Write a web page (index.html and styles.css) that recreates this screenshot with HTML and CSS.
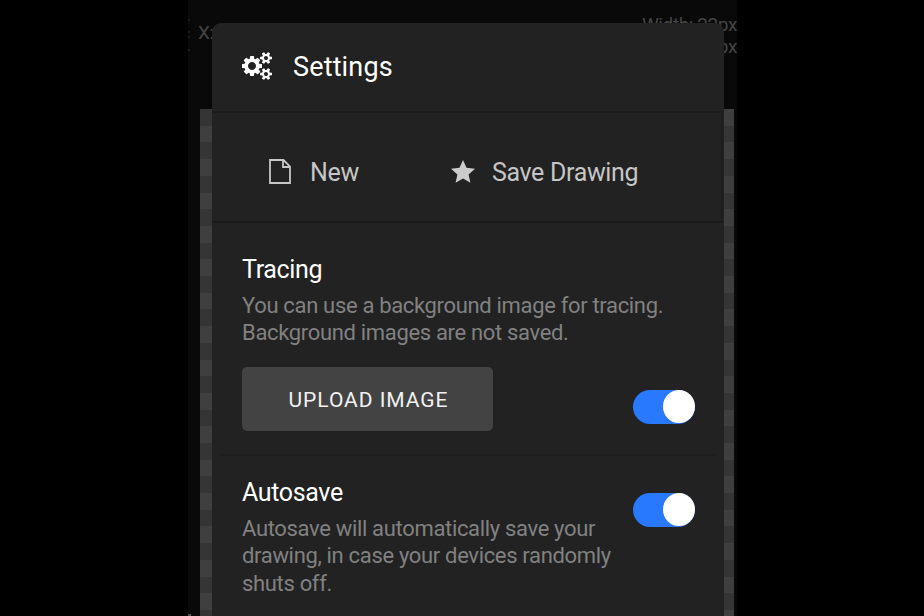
FILE: index.html
```html
<!DOCTYPE html>
<html lang="en">
<head>
<meta charset="utf-8">
<title>Settings</title>
<link rel="stylesheet" href="styles.css">
</head>
<body>
<div class="app">
  <div class="editor">
    <header class="toolbar">
      <svg class="menu-edge" viewBox="0 0 2 34"><path d="M0 1h2M0 13h2M0 18h2M0 31h2"/></svg>
      <span class="position">X:</span>
      <span class="dimensions">Width: 22px<br>Height: 22px</span>
    </header>
    <div class="canvas"><div class="checker checker-left"></div><div class="checker checker-right"></div></div>
  </div>
  <span class="swatch-edge"></span>
  <main class="modal">
    <header class="modal-header">
      <svg class="cogs" viewBox="0 0 1920 1792"><path d="M896 896q0-106-75-181t-181-75-181 75-75 181 75 181 181 75 181-75 75-181zm768 512q0-52-38-90t-90-38-90 38-38 90q0 53 37.500 90.500t90.500 37.500 90.500-37.500 37.500-90.500zm0-1024q0-52-38-90t-90-38-90 38-38 90q0 53 37.500 90.500t90.500 37.500 90.500-37.500 37.500-90.500zm-384 421v185q0 10-7 19.500t-16 10.500l-155 24q-11 35-32 76 34 48 90 115 7 11 7 20 0 12-7 19-23 30-82.500 89.500t-78.500 59.500q-11 0-21-7l-115-90q-37 19-77 31-11 108-23 155-7 24-30 24h-186q-11 0-20-7.500t-10-17.500l-23-153q-34-10-75-31l-118 89q-7 7-20 7-11 0-21-8-144-133-144-160 0-9 7-19 10-14 41-53t47-61q-23-44-35-82l-152-24q-10-1-17-9.500t-7-19.500v-185q0-10 7-19.500t16-10.500l155-24q11-35 32-76-34-48-90-115-7-11-7-20 0-12 7-20 22-30 82-89t79-59q11 0 21 7l115 90q34-18 77-32 11-108 23-154 7-24 30-24h186q11 0 20 7.500t10 17.500l23 153q34 10 75 31l118-89q8-7 20-7 11 0 21 8 144 133 144 160 0 8-7 19-12 16-42 54t-45 60q23 48 34 82l152 23q10 2 17 10.500t7 19.500zm640 533v140q0 16-149 31-12 27-30 52 51 113 51 138 0 4-4 7-122 71-124 71-8 0-46-47t-52-68q-20 2-30 2t-30-2q-14 21-52 68t-46 47q-2 0-124-71-4-3-4-7 0-25 51-138-18-25-30-52-149-15-149-31v-140q0-16 149-31 13-29 30-52-51-113-51-138 0-4 4-7 4-2 35-20t59-34 30-16q8 0 46 46.500t52 67.500q20-2 30-2t30 2q51-71 92-112l6-2q4 0 124 70 4 3 4 7 0 25-51 138 17 23 30 52 149 15 149 31zm0-1024v140q0 16-149 31-12 27-30 52 51 113 51 138 0 4-4 7-122 71-124 71-8 0-46-47t-52-68q-20 2-30 2t-30-2q-14 21-52 68t-46 47q-2 0-124-71-4-3-4-7 0-25 51-138-18-25-30-52-149-15-149-31v-140q0-16 149-31 13-29 30-52-51-113-51-138 0-4 4-7 4-2 35-20t59-34 30-16q8 0 46 46.500t52 67.500q20-2 30-2t30 2q51-71 92-112l6-2q4 0 124 70 4 3 4 7 0 25-51 138 17 23 30 52 149 15 149 31z"/></svg>
      <h1>Settings</h1>
    </header>
    <nav class="actions">
      <a class="action"><svg class="file" viewBox="0 0 22 25"><path d="M1 1h13.500l6.500 6.500V24H1zM14 1v7h7"/></svg><span>New</span></a>
      <a class="action save"><svg class="star" viewBox="0 0 24 23"><path d="M12 0l3.500 7.800 8.500.9-6.400 5.700 1.800 8.400-7.400-4.300-7.400 4.300 1.800-8.400L0 8.700l8.500-.9z"/></svg><span>Save Drawing</span></a>
    </nav>
    <section class="setting tracing">
      <h2>Tracing</h2>
      <p>You can use a background image for tracing.<br>Background images are not saved.</p>
      <div class="upload-row">
        <button class="upload">UPLOAD IMAGE</button>
        <span class="toggle"></span>
      </div>
    </section>
    <section class="setting autosave">
      <div>
        <h2>Autosave</h2>
        <p>Autosave will automatically save your<br>drawing, in case your devices randomly<br>shuts off.</p>
      </div>
      <span class="toggle"></span>
    </section>
  </main>
</div>
</body>
</html>
```
FILE: styles.css
```css
* { box-sizing: border-box; }
body { margin: 0; background: #000; font-family: Roboto, sans-serif; }
h1, h2, p { margin: 0; font-weight: 400; }
.app { position: relative; width: 549px; height: 616px; margin-left: 188px; overflow: hidden; background: #090909; }
.editor { height: 616px; display: flex; flex-direction: column; }
.toolbar { height: 109px; flex: none; display: flex; align-items: flex-start; padding-top: 14px; color: #454545; font-size: 19px; line-height: 22px; letter-spacing: -0.4px; white-space: nowrap; }
.menu-edge { width: 2px; height: 34px; margin: 5px 8px 0 0; stroke: #303030; }
.position { padding-top: 8px; }
.dimensions { margin-left: auto; text-align: right; }
.canvas { flex: 1; margin: 0 3px 0 12px; display: flex; justify-content: space-between; }
.checker { width: 13px; }
.checker-left { background: repeating-linear-gradient(#353535 0 16.7px, #3f3f3f 16.7px 33.4px); }
.checker-right { background: repeating-linear-gradient(#3f3f3f 0 16.7px, #353535 16.7px 33.4px); }
.swatch-edge { position: absolute; left: 0; bottom: 0; width: 3px; height: 2px; background: linear-gradient(90deg, #803020, #20757a); }
.modal { position: absolute; top: 23px; left: 24px; width: 512px; height: 620px; background: #222; border-radius: 9px; }
.modal-header { height: 90px; display: flex; align-items: center; padding: 0 30px 3px; border-bottom: 2px solid #1c1c1c; color: #fff; }
.cogs { width: 30px; height: 28px; fill: #fff; margin-right: 21px; }
h1 { padding-top: 2px; font-size: 27px; line-height: 32px; letter-spacing: 0.15px; }
.actions { height: 110px; margin-right: 1px; display: flex; align-items: center; padding: 9px 56px 0 57px; border-bottom: 2px solid #1b1b1b; border-right: 2px solid #1d1d1d; color: #c6c6c6; font-size: 25px; letter-spacing: -0.33px; }
.action { display: flex; align-items: center; }
.action span { padding-top: 2px; }
.save { margin-left: 92px; }
.file { width: 22px; height: 25px; fill: none; stroke: #c6c6c6; stroke-width: 1.8; margin-right: 19px; }
.star { width: 24px; height: 23px; fill: #ccc; margin-right: 17px; }
.setting { margin: 0 8px; padding: 31px 21px 0 22px; }
h2 { color: #fff; font-size: 25px; line-height: 32px; letter-spacing: -0.35px; }
p { margin-top: 6px; color: #818181; font-size: 22px; line-height: 27.3px; letter-spacing: -0.33px; white-space: nowrap; }
.tracing { height: 233px; border-bottom: 2px solid #1f1f1f; }
.upload-row { display: flex; justify-content: space-between; margin-top: 20.4px; }
.upload { width: 251px; height: 64px; padding: 2px 4px 0 6px; border: 0; border-radius: 5px; background: #434343; color: #f2f2f2; font: 400 21px Roboto, sans-serif; letter-spacing: 0.95px; }
.toggle { width: 62px; height: 34px; flex: none; display: flex; justify-content: flex-end; align-items: flex-start; border-radius: 17px; background: #2979ff; }
.toggle::after { content: ""; width: 32px; height: 33px; border-radius: 50%; background: #fff; }
.upload-row .toggle { margin-top: 22.6px; }
.autosave { display: flex; justify-content: space-between; padding-top: 21px; }
.autosave .toggle { margin-top: 16px; }
```
